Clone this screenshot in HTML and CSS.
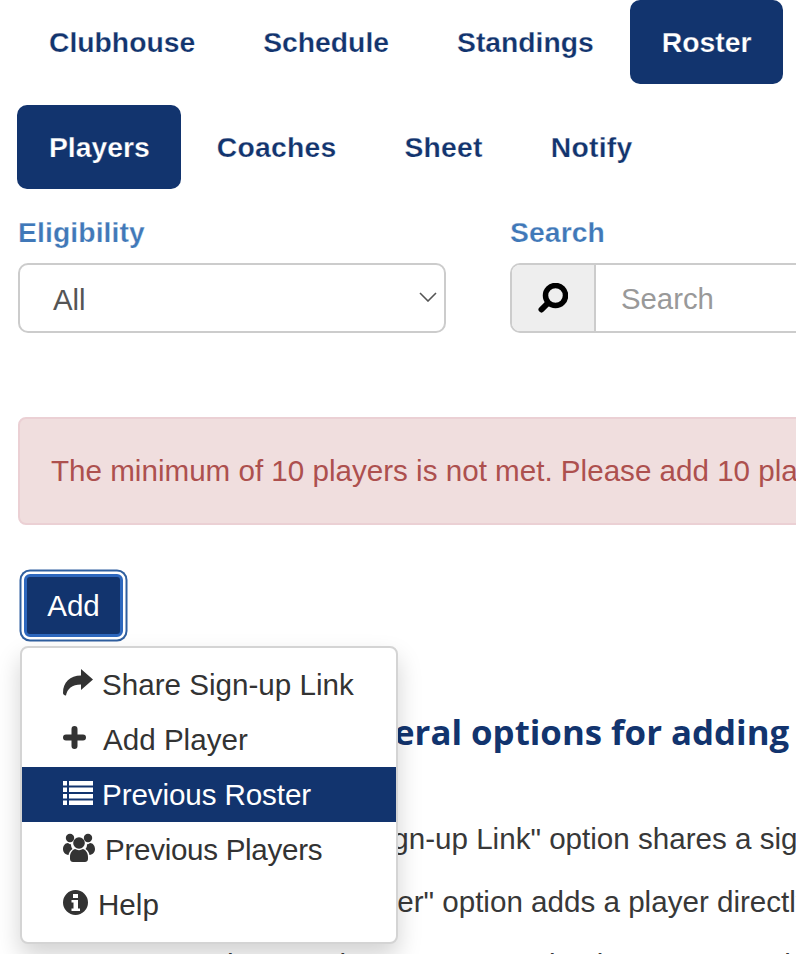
FILE: index.html
```html
<!DOCTYPE html>
<html lang="en">
<head>
<meta charset="utf-8">
<title>Roster</title>
<link rel="stylesheet" href="styles.css">
</head>
<body>
<div class="frame">
  <nav class="tabs tabs-main">
    <a class="tab">Clubhouse</a>
    <a class="tab">Schedule</a>
    <a class="tab">Standings</a>
    <a class="tab active">Roster</a>
  </nav>
  <nav class="tabs tabs-sub">
    <a class="tab active">Players</a>
    <a class="tab">Coaches</a>
    <a class="tab">Sheet</a>
    <a class="tab">Notify</a>
  </nav>
  <div class="filters">
    <div class="field field-elig">
      <label class="label">Eligibility</label>
      <div class="select"><span>All</span>
        <svg class="chev" viewBox="0 0 18 10" width="18" height="10"><path d="M1 1l8 8 8-8" fill="none" stroke="#555" stroke-width="1.6"/></svg>
      </div>
    </div>
    <div class="field field-search">
      <label class="label">Search</label>
      <div class="group">
        <span class="addon">
          <svg viewBox="0 0 30 30" width="30" height="30"><circle cx="17.500" cy="12.500" r="10" fill="none" stroke="#000" stroke-width="5.500"/><path d="M9.500 20.500L3.500 26.500" stroke="#000" stroke-width="6" stroke-linecap="round"/></svg>
        </span>
        <span class="input">Search</span>
      </div>
    </div>
  </div>
  <div class="alert">The minimum of 10 players is not met. Please add 10 players to the roster before the season starts.</div>
  <div class="actions">
    <button class="btn">Add</button>
    <ul class="menu">
      <li class="item"><svg class="ic ic-share" viewBox="0 0 30 27"><path d="M30 10.500L18 0v6.500C7 6.500 0 13 0 24c0 1.500 2 3 3 2.500C4 20 9 15.500 18 15.500V21z" fill="#333"/></svg><span>Share Sign-up Link</span></li>
      <li class="item"><svg class="ic ic-plus" viewBox="0 0 23 23"><path d="M11.500 3v17M3 11.500h17" fill="none" stroke="#333" stroke-width="6" stroke-linecap="round"/></svg><span>Add Player</span></li>
      <li class="item on"><svg class="ic ic-list" viewBox="0 0 30 24"><path d="M0 0h4v4.500H0zM6 0h24v4.500H6zM0 6.500h4v4.500H0zM6 6.500h24v4.500H6zM0 13h4v4.500H0zM6 13h24v4.500H6zM0 19.500h4V24H0zM6 19.500h24V24H6z" fill="#fff"/></svg><span class="snug">Previous Roster</span></li>
      <li class="item"><svg class="ic ic-users" viewBox="0 0 32 29"><g fill="#333"><circle cx="7" cy="5" r="4.200"/><circle cx="25" cy="5" r="4.200"/><circle cx="16" cy="10" r="5.800"/><path d="M0 16c0-3 2-6 5-6 1 1 2 1.200 3 1.200 0 2 .5 3.500 1.500 4.800C7 17.500 6 19.500 5.500 22 2 21.500 0 19 0 16zM32 16c0-3-2-6-5-6-1 1-2 1.200-3 1.200 0 2-.5 3.500-1.500 4.800 2.500 1.500 3.500 3.500 4 6 3.500-.5 5.500-3 5.500-6z"/><path d="M7 24c0-4 2-7 5-8 2.500 1.500 5.500 1.500 8 0 3 1 5 4 5 8v2c0 2-1.500 3-3 3H10c-1.500 0-3-1-3-3z"/></g></svg><span class="tight">Previous Players</span></li>
      <li class="item"><svg class="ic ic-info" viewBox="0 0 25 25"><path fill="#333" fill-rule="evenodd" d="M12.500 0a12.500 12.500 0 1 0 0 25a12.500 12.500 0 0 0 0-25zM10 4h5v4h-5zM8.500 10h6.500v8.500h2V21H8.500v-2.500h2V12.500h-2z"/></svg><span>Help</span></li>
    </ul>
  </div>
  <section class="help">
    <h2 class="help-title">There are several options for adding players</h2>
    <ol class="help-list">
      <li class="help-line">The "Share Sign-up Link" option shares a sign-up link with players</li>
      <li class="help-line">The "Add Player" option adds a player directly to the roster</li>
      <li class="help-line">The "Previous Roster" option imports a previous roster</li>
    </ol>
  </section>
</div>
</body>
</html>
```
FILE: styles.css
```css
* { box-sizing: border-box; }
html, body { margin: 0; padding: 0; background: #fff; }
.frame { width: 796px; height: 954px; overflow: hidden; font-family: "Liberation Sans", Arial, sans-serif; color: #333; }
.tabs { display: flex; padding-left: 17px; gap: 4px; }
.tab { height: 84px; display: flex; align-items: center; padding: 0 32px; border-radius: 10px; color: #12346e; font-size: 28.3px; font-weight: bold; -webkit-text-stroke: .25px #fff; }
.tab.active { background: #12346e; color: #fff; -webkit-text-stroke: .25px #12346e; }
.tabs-sub { margin-top: 21px; }
.tabs-sub .tab { letter-spacing: .25px; }
.tabs-sub .tab.active { letter-spacing: 0; padding-right: 31px; }
.filters { display: flex; margin-top: 23px; padding-left: 18px; }
.field { flex: none; }
.field-elig { width: 428px; }
.field-search { margin-left: 64px; width: 400px; }
.label { display: block; color: #4078b8; font-size: 28.3px; font-weight: bold; letter-spacing: .1px; -webkit-text-stroke: .25px #fff; line-height: 40px; }
.select { margin-top: 11px; height: 70px; border: 2px solid #ccc; border-radius: 10px; display: flex; align-items: center; justify-content: space-between; padding: 3px 7px 0 33px; font-size: 29.3px; color: #555; }
.chev { margin-bottom: 5px; }
.group { margin-top: 11px; display: flex; height: 70px; border: 2px solid #ccc; border-radius: 10px 0 0 10px; border-right: 0; }
.addon { width: 84px; background: #eee; border-right: 2px solid #ccc; border-radius: 8px 0 0 8px; display: flex; align-items: center; justify-content: center; }
.input { flex: 1; display: flex; align-items: center; padding: 2px 0 0 25px; font-size: 29.3px; color: #999; }
.alert { margin: 84px 0 0 18px; width: 900px; height: 108px; background: #f0dede; border: 2px solid #ebd0d4; border-radius: 8px; color: #ad504e; font-size: 29.6px; padding: 0 0 0 31px; line-height: 104px; white-space: nowrap; }
.actions { position: relative; margin: 49px 0 0 24px; height: 63px; }
.btn { display: block; width: 99px; height: 63px; padding: 0; background: #12346e; color: #fff; font: 29.6px "Liberation Sans", Arial, sans-serif; border: 3px solid #2d67bd; border-radius: 6px; box-shadow: 0 0 0 2.500px #fff, 0 0 0 4.500px #2f5f9f; }
.menu { position: absolute; z-index: 5; left: -4px; top: 72px; width: 378px; height: 298px; margin: 0; padding: 9px 0; list-style: none; background: #fff; border: 2px solid #d4d4d4; border-radius: 8px; box-shadow: 0 12px 24px rgba(0,0,0,.175); }
.item { height: 55px; display: flex; align-items: center; padding: 0 0 0 41px; font-size: 29.6px; color: #333; white-space: nowrap; }
.item.on { background: #12346e; color: #fff; }
.tight { letter-spacing: -.3px; }
.snug { letter-spacing: -.1px; }
.ic { flex: none; margin-bottom: 4px; }
.ic-share { width: 30px; height: 27px; margin-right: 9px; }
.ic-plus { width: 23px; height: 23px; margin-right: 17px; }
.ic-list { width: 30px; height: 24px; margin-right: 9px; }
.ic-users { width: 32px; height: 29px; margin-right: 10px; }
.ic-info { width: 25px; height: 25px; margin-right: 10px; }
.help { margin-top: 72px; white-space: nowrap; }
.help-title { margin: 0; padding-left: 161px; font-family: "Open Sans", sans-serif; font-size: 34.8px; font-weight: 700; color: #12346e; line-height: 46px; }
.help-list { margin: 63px 0 0; padding: 0 0 0 209px; }
.help-line { font-size: 29.6px; line-height: 42px; margin-bottom: 21px; color: #383838; }
```
